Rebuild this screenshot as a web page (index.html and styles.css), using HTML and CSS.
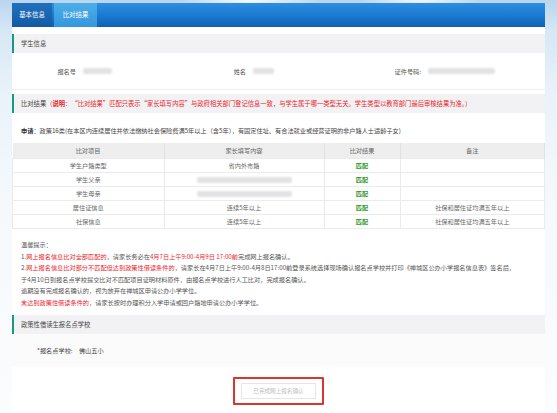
FILE: index.html
```html
<!DOCTYPE html>
<html lang="zh-CN">
<head>
    <meta charset="UTF-8">
    <meta name="viewport" content="width=device-width, initial-scale=1.0">
    <title>比对结果</title>
    <link rel="stylesheet" href="styles.css">
</head>
<body>
    <div class="page">
        <div class="tabs">
            <a class="tab tab-basic">基本信息</a>
            <a class="tab tab-result">比对结果</a>
        </div>

        <div class="panel">
            <div class="section-title">学生信息</div>
            <div class="info-row">
                <div class="info-item item-no">
                    <span class="info-label">报名号</span>
                    <span class="blur blur-no"></span>
                </div>
                <div class="info-item item-name">
                    <span class="info-label">姓名</span>
                    <span class="blur blur-name"></span>
                </div>
                <div class="info-item">
                    <span class="info-label">证件号码:</span>
                    <span class="blur blur-id"></span>
                </div>
            </div>

            <div class="section-title">比对结果<span class="note">（<b>说明</b>：“比对结果”匹配只表示“家长填写内容”与政府相关部门登记信息一致，与学生属于哪一类型无关。学生类型以教育部门最后审核结果为准。）</span></div>
            <p class="apply"><b>申请</b>：政策16类(在本区内连续居住并依法缴纳社会保险费满5年以上（含5年），有固定住址、有合法就业或经营证明的非户籍人士适龄子女)</p>

            <table class="compare">
                <thead>
                    <tr>
                        <th class="col-item">比对项目</th>
                        <th class="col-fill">家长填写内容</th>
                        <th class="col-result">比对结果</th>
                        <th class="col-memo">备注</th>
                    </tr>
                </thead>
                <tbody>
                    <tr>
                        <td>学生户籍类型</td>
                        <td>省内外市籍</td>
                        <td class="match">匹配</td>
                        <td></td>
                    </tr>
                    <tr>
                        <td>学生父亲</td>
                        <td><span class="blur blur-cell"></span></td>
                        <td class="match">匹配</td>
                        <td></td>
                    </tr>
                    <tr>
                        <td>学生母亲</td>
                        <td><span class="blur blur-cell"></span></td>
                        <td class="match">匹配</td>
                        <td></td>
                    </tr>
                    <tr>
                        <td>居住证信息</td>
                        <td>连续5年以上</td>
                        <td class="match">匹配</td>
                        <td>社保和居住证均满五年以上</td>
                    </tr>
                    <tr>
                        <td>社保信息</td>
                        <td>连续5年以上</td>
                        <td class="match">匹配</td>
                        <td>社保和居住证均满五年以上</td>
                    </tr>
                </tbody>
            </table>

            <div class="tips">
                <p>温馨提示：</p>
                <p>1.<span class="red">网上报名信息比对全部匹配的</span>，请家长务必在<span class="red">4月7日上午9:00-4月9日 17:00前</span>完成网上报名确认。</p>
                <p>2.<span class="red">网上报名信息比对部分不匹配但达到政策性借读条件的</span>，请家长在4月7日上午9:00-4月8日17:00前登录系统选择现场确认报名点学校并打印《禅城区公办小学报名信息表》签名后，</p>
                <p>于4月10日到报名点学校提交比对不匹配项目证明材料原件，由报名点学校进行人工比对，完成报名确认。</p>
                <p>逾期没有完成报名确认的，视为放弃在禅城区申请公办小学学位。</p>
                <p><span class="red">未达到政策性借读条件的</span>，请家长按时办理积分入学申请或回户籍地申请公办小学学位。</p>
            </div>

            <div class="section-title">政策性借读生报名点学校</div>
            <div class="school-row">
                <span class="school-label">*报名点学校:</span>
                <span>佛山五小</span>
            </div>

            <div class="actions">
                <div class="highlight">
                    <button class="confirm-btn" disabled>已完成网上报名确认</button>
                </div>
            </div>
        </div>
    </div>
</body>
</html>
```

FILE: styles.css
```css
body {
    margin: 0;
    font-family: "Noto Sans CJK SC", "Noto Sans", sans-serif;
    font-size: 6.2px;
    color: #555;
    background:
        radial-gradient(ellipse 40px 6px at 75px 29px, rgba(255,255,255,0.95), rgba(255,255,255,0)),
        radial-gradient(ellipse 70px 5px at 250px 1px, rgba(255,255,255,0.9), rgba(255,255,255,0)),
        radial-gradient(ellipse 60px 5px at 420px 1px, rgba(255,255,255,0.8), rgba(255,255,255,0)),
        linear-gradient(180deg, #b9d6ee 0, #d6e7f5 30px, #e9f2fa 90px, #f5f9fc 200px, #fbfcfe 413px);
    min-height: 413px;
}
p {
    margin: 0;
}
.page {
    padding: 3px 12px 0;
}
.tabs {
    display: flex;
    height: 24px;
    background: linear-gradient(180deg, #2c8fe0 0%, #1a78cf 55%, #0d62b4 100%);
}
.tab {
    display: block;
    line-height: 24px;
    color: #fff;
    font-size: 6.4px;
    text-align: center;
}
.tab-basic {
    width: 40px;
    background: linear-gradient(180deg, #2070bd, #145aa3);
}
.tab-result {
    width: 43px;
    margin-left: 2px;
    background: linear-gradient(180deg, #4eaee9, #3397dd);
}
.panel {
    background: #fff;
    padding-top: 7px;
    min-height: 379px;
}
.section-title {
    height: 19px;
    line-height: 19px;
    background: #f2f2f4;
    border-left: 2px solid #179a84;
    padding-left: 7px;
    color: #444;
    font-size: 6.3px;
}
.note {
    color: #e8252b;
}
.note b {
    font-weight: bold;
}
.info-row {
    display: flex;
    align-items: center;
    height: 36px;
    border-bottom: 1px solid #eee;
    margin-bottom: 4px;
}
.info-item {
    display: flex;
    align-items: center;
}
.item-no {
    width: 170px;
}
.item-name {
    width: 175px;
}
.info-label {
    width: 64px;
    margin-right: 7px;
    text-align: right;
}
.blur {
    display: inline-block;
    height: 6px;
    background: #e2e2e4;
    border-radius: 2px;
    filter: blur(1px);
}
.blur-no {
    width: 29px;
}
.blur-name {
    width: 21px;
}
.blur-id {
    width: 67px;
}
.blur-cell {
    width: 95px;
    vertical-align: middle;
}
.apply {
    padding: 13px 9px 7px;
    line-height: 10px;
    color: #444;
}
.apply b {
    color: #333;
}
.compare {
    width: 533px;
    border-collapse: collapse;
    table-layout: fixed;
    color: #666;
}
.compare th {
    height: 15px;
    padding: 0;
    background: #eeeeee;
    font-weight: normal;
    border-right: 1px solid #e2e2e2;
}
.compare td {
    height: 13px;
    padding: 0;
    text-align: center;
    border: 1px solid #ebebeb;
}
.col-item {
    width: 151px;
}
.col-fill {
    width: 159px;
}
.col-result {
    width: 75px;
}
.compare td.match {
    color: #2f9a2a;
    font-weight: bold;
}
.tips {
    padding: 10px 9px 6px;
    line-height: 11.6px;
}
.red {
    color: #e8252b;
}
.school-row {
    height: 33px;
    line-height: 33px;
    background: #fbfbfb;
    padding-left: 25px;
    color: #444;
}
.school-label {
    margin-right: 5px;
}
.actions {
    display: flex;
    justify-content: center;
    padding-top: 10px;
}
.highlight {
    border: 2px solid #d8372d;
    padding: 4px 6px;
    border-radius: 1px;
}
.confirm-btn {
    display: block;
    width: 75px;
    height: 16px;
    padding: 0;
    border: 1px solid #e6e6e6;
    background: #fff;
    color: #c0c0c0;
    font-family: inherit;
    font-size: 5.6px;
}
```
